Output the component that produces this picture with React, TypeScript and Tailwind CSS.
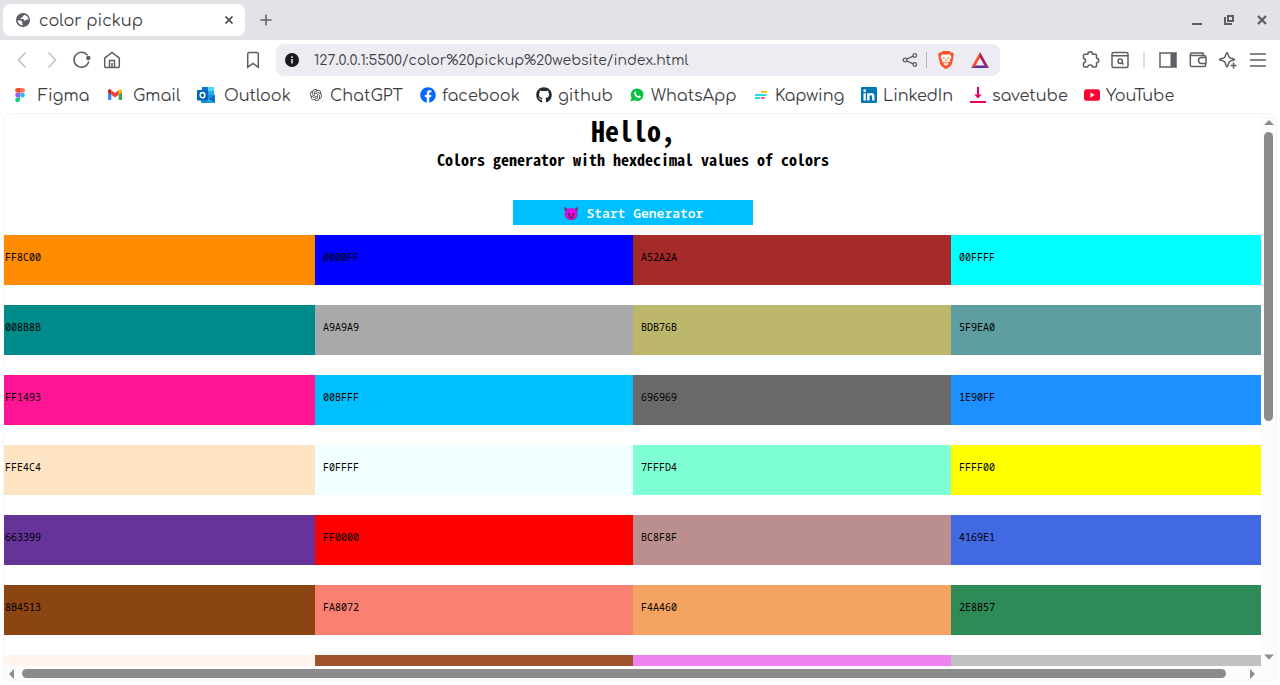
import type { ReactNode } from 'react';
import { FaFacebook, FaGithub } from 'react-icons/fa';
import { SiOpenai } from 'react-icons/si';

const swatches = [
  { hex: 'FF8C00', bg: 'bg-[#ff8c00]' },
  { hex: '0000FF', bg: 'bg-[#0000ff]' },
  { hex: 'A52A2A', bg: 'bg-[#a52a2a]' },
  { hex: '00FFFF', bg: 'bg-[#00ffff]' },
  { hex: '008B8B', bg: 'bg-[#008b8b]' },
  { hex: 'A9A9A9', bg: 'bg-[#a9a9a9]' },
  { hex: 'BDB76B', bg: 'bg-[#bdb76b]' },
  { hex: '5F9EA0', bg: 'bg-[#5f9ea0]' },
  { hex: 'FF1493', bg: 'bg-[#ff1493]' },
  { hex: '00BFFF', bg: 'bg-[#00bfff]' },
  { hex: '696969', bg: 'bg-[#696969]' },
  { hex: '1E90FF', bg: 'bg-[#1e90ff]' },
  { hex: 'FFE4C4', bg: 'bg-[#ffe4c4]' },
  { hex: 'F0FFFF', bg: 'bg-[#f0ffff]' },
  { hex: '7FFFD4', bg: 'bg-[#7fffd4]' },
  { hex: 'FFFF00', bg: 'bg-[#ffff00]' },
  { hex: '663399', bg: 'bg-[#663399]' },
  { hex: 'FF0000', bg: 'bg-[#ff0000]' },
  { hex: 'BC8F8F', bg: 'bg-[#bc8f8f]' },
  { hex: '4169E1', bg: 'bg-[#4169e1]' },
  { hex: '8B4513', bg: 'bg-[#8b4513]' },
  { hex: 'FA8072', bg: 'bg-[#fa8072]' },
  { hex: 'F4A460', bg: 'bg-[#f4a460]' },
  { hex: '2E8B57', bg: 'bg-[#2e8b57]' },
  { hex: '', bg: 'bg-[#fff5ee]' },
  { hex: '', bg: 'bg-[#a0522d]' },
  { hex: '', bg: 'bg-[#ee82ee]' },
  { hex: '', bg: 'bg-[#c0c0c0]' },
];

const FigmaIcon = () => (
  <svg width="16" height="16" viewBox="0 0 16 16">
    <path d="M5.500 1H8v4.700H5.500a2.350 2.350 0 0 1 0-4.700z" fill="#f24e1e" />
    <path d="M8 1h2.600a2.350 2.350 0 0 1 0 4.700H8z" fill="#ff7262" />
    <path d="M5.500 5.700H8v4.700H5.500a2.350 2.350 0 0 1 0-4.700z" fill="#a259ff" />
    <circle cx="10.500" cy="8.050" r="2.400" fill="#1abcfe" />
    <path d="M5.500 10.400H8v2.300a2.400 2.400 0 1 1-2.500-2.300z" fill="#0acf83" />
  </svg>
);

const GmailIcon = () => (
  <svg width="16" height="16" viewBox="0 0 16 16">
    <path d="M1 4v8.200c0 .5.400.9.900.9h2.400V6.500z" fill="#4285f4" />
    <path d="M15 4v8.200c0 .5-.4.900-.9.900h-2.400V6.500z" fill="#34a853" />
    <path d="M11.700 3.300v4.400L15 5.200V3.900c0-1.500-1.600-2.200-2.700-1.300z" fill="#fbbc04" />
    <path d="M4.300 7.700V3.300L8 6.100l3.700-2.800v4.400L8 10.500z" fill="#ea4335" />
    <path d="M1 3.900v1.300l3.300 2.500V3.300l-.6-.7C2.600 1.800 1 2.400 1 3.900z" fill="#c5221f" />
  </svg>
);

const OutlookIcon = () => (
  <svg width="18" height="18" viewBox="0 0 18 18" className="shrink-0">
    <path d="M5 1h12v8H5z" fill="#28a8ea" />
    <path d="M5 1h6v4H5z" fill="#0078d4" />
    <path d="M11 1h6v4h-6z" fill="#50d9ff" />
    <path d="M4 8l14 1v7a1 1 0 0 1-1 1H5a1 1 0 0 1-1-1z" fill="#1490df" />
    <path d="M18 8.500L8 14l9 3q1 0 1-1z" fill="#35b8f1" />
    <path d="M18 8.500L11 13l7 4z" fill="#0f6fc0" />
    <rect y="4" width="11" height="10.500" rx="1" fill="#0364b8" />
    <ellipse cx="5.500" cy="9.200" rx="2.300" ry="2.600" fill="none" stroke="#fff" strokeWidth="1.500" />
  </svg>
);

const WhatsAppIcon = () => (
  <svg width="16" height="16" viewBox="0 0 16 16">
    <path d="M8.300 1.400a6.300 6.300 0 1 1-3 11.900L1.300 14.600l1.300-3.700a6.300 6.300 0 0 1 5.700-9.500z" fill="#0bc144" />
    <path d="M5.900 4.600c.4-.3.800-.2 1 .2l.5 1.200c.1.400-.5.800-.5 1.100.5 1 1.300 1.700 2.300 2.100.4 0 .7-.8 1.100-.7l1.300.7c.4.300.1 1.200-.5 1.600-2.500 1.300-6.600-2.600-5.900-5 .1-.5.400-.9.700-1.200z" fill="#fff" />
  </svg>
);

const KapwingIcon = () => (
  <svg width="16" height="16" viewBox="0 0 16 16">
    <path d="M8 4h6v2H8z" fill="#ffc21a" />
    <path d="M2 7h11.500v2H2z" fill="#22dde1" />
    <path d="M2 10h5.500v2H2z" fill="#22dde1" />
    <path d="M8.500 10h3v2h-3z" fill="#ff3f78" />
  </svg>
);

const LinkedInIcon = () => (
  <svg width="16" height="16" viewBox="0 0 16 16">
    <rect width="16" height="16" rx="1" fill="#0077b5" />
    <path d="M2.500 6.200h2.300v7.300H2.500zM6.200 6.200h2.200v1c1-1.800 5-1.800 5 1.900v4.400h-2.300V9.600c0-2-2.600-1.900-2.600 0v3.900H6.200z" fill="#fff" />
    <circle cx="3.650" cy="3.700" r="1.350" fill="#fff" />
  </svg>
);

const SaveTubeIcon = () => (
  <svg width="16" height="16" viewBox="0 0 16 16">
    <path d="M7 0h2v7.500h2.800L8 11.500 4.200 7.500H7zM0 14h16v2H0z" fill="#f0005e" />
  </svg>
);

const YouTubeIcon = () => (
  <svg width="16" height="16" viewBox="0 0 16 16">
    <rect y="2.300" width="16" height="11.400" rx="2.800" fill="#ff0033" />
    <path d="M6.500 5.500v5L10.700 8z" fill="#fff" />
  </svg>
);

const bookmarks: { label: string; icon: ReactNode; gap: string }[] = [
  { label: 'Figma', icon: <FigmaIcon />, gap: 'gap-[10px]' },
  { label: 'Gmail', icon: <GmailIcon />, gap: 'gap-[10px]' },
  { label: 'Outlook', icon: <OutlookIcon />, gap: 'gap-[10px]' },
  { label: 'ChatGPT', icon: <SiOpenai size={12} color="#3c3c3c" />, gap: 'gap-[6px]' },
  { label: 'facebook', icon: <FaFacebook size={16} color="#0866ff" />, gap: 'gap-[6px]' },
  { label: 'github', icon: <FaGithub size={16} color="#24292f" />, gap: 'gap-[6px]' },
  { label: 'WhatsApp', icon: <WhatsAppIcon />, gap: 'gap-[6px]' },
  { label: 'Kapwing', icon: <KapwingIcon />, gap: 'gap-[6px]' },
  { label: 'LinkedIn', icon: <LinkedInIcon />, gap: 'gap-[6px]' },
  { label: 'savetube', icon: <SaveTubeIcon />, gap: 'gap-[6px]' },
  { label: 'YouTube', icon: <YouTubeIcon />, gap: 'gap-[6px]' },
];

function IconButton({ label, children }: { label: string; children: ReactNode }) {
  return (
    <button type="button" aria-label={label} className="flex size-5 shrink-0 items-center justify-center">
      {children}
    </button>
  );
}

const line = { fill: 'none', stroke: '#5c5f66', strokeWidth: 1.5 } as const;

function TabStrip() {
  return (
    <header className="flex h-10 items-center bg-[#e3e2e7] pr-2 pl-[3px]">
      <div className="flex h-8 w-[242px] items-center rounded-lg bg-white pr-[6px] pl-3">
        <svg width="16" height="16" viewBox="0 0 16 16" className="shrink-0">
          <circle cx="8" cy="8" r="7" fill="#5b5e66" />
          <path d="M9.200 3L7.800 4.200c0 1-.6 1.500-1.800 1.500L5.300 7h3l.9 1.500 1.600.1.700-1.100 2 0c-.1-2.200-1.600-4-4.300-4.500zM2.600 8.200l3.300.2 1.600 2-.4.9.9 1.900c-2.900.1-5.100-1.800-5.400-5z" fill="#fff" />
        </svg>
        <span className="ml-2 flex-1 pt-[2px] text-base/5 whitespace-nowrap">color pickup</span>
        <IconButton label="Close tab">
          <svg width="12" height="12" viewBox="0 0 12 12">
            <path d="M2.500 2.500l7 7m0-7l-7 7" stroke="#404247" strokeWidth="1.700" />
          </svg>
        </IconButton>
      </div>
      <div className="ml-[11px] flex flex-1">
        <IconButton label="New tab">
          <svg width="12" height="12" viewBox="0 0 12 12">
            <path d="M.5 6h11M6 .5v11" {...line} />
          </svg>
        </IconButton>
      </div>
      <div className="flex items-center gap-3">
        <IconButton label="Minimize">
          <svg width="12" height="12" viewBox="0 0 12 12">
            <path d="M0 9h10v2H0z" fill="#5c5f66" />
          </svg>
        </IconButton>
        <IconButton label="Restore">
          <svg width="12" height="12" viewBox="0 0 12 12">
            <path d="M4 2h5v5H4zM1 3v7h7" fill="none" stroke="#5c5f66" strokeWidth="2" />
          </svg>
        </IconButton>
        <IconButton label="Close window">
          <svg width="12" height="12" viewBox="0 0 12 12">
            <path d="M2 2l8 8m0-8l-8 8" stroke="#5c5f66" strokeWidth="2.300" />
          </svg>
        </IconButton>
      </div>
    </header>
  );
}

function Toolbar() {
  return (
    <div className="flex h-10 items-center pr-3 pl-3">
      <nav className="flex flex-[0_1_231px] items-center gap-[10px]">
        <IconButton label="Back">
          <svg width="20" height="20" viewBox="0 0 20 20">
            <path d="M13.500 2.500L6.500 10l7 7.500" fill="none" stroke="#bfc1c6" strokeWidth="1.500" />
          </svg>
        </IconButton>
        <IconButton label="Forward">
          <svg width="20" height="20" viewBox="0 0 20 20">
            <path d="M6.500 2.500l7 7.500-7 7.500" fill="none" stroke="#bfc1c6" strokeWidth="1.500" />
          </svg>
        </IconButton>
        <IconButton label="Reload">
          <svg width="20" height="20" viewBox="0 0 20 20">
            <path d="M16.800 11.500a7.500 7.500 0 1 1-1.300-6.300" {...line} />
            <circle cx="16.300" cy="8" r="2.200" fill="#5c5f66" />
          </svg>
        </IconButton>
        <IconButton label="Home">
          <svg width="20" height="20" viewBox="0 0 20 20">
            <path d="M2.700 8.200L10 2.500l7.300 5.700v8.300c0 .6-.4 1-1 1H3.700c-.6 0-1-.4-1-1zM7.500 17.500v-7h5v7M10 13v4" {...line} />
          </svg>
        </IconButton>
      </nav>
      <IconButton label="Bookmark this page">
        <svg width="20" height="20" viewBox="0 0 20 20">
          <path d="M4.700 17.200V4c0-1 .5-1.500 1.500-1.500h7.600c1 0 1.500.5 1.500 1.500v13.200L10 13.500z" {...line} />
        </svg>
      </IconButton>
      <div className="ml-[13px] flex h-8 flex-1 items-center rounded-lg bg-[#edecf2] pr-[10px] pl-2">
        <svg width="16" height="16" viewBox="0 0 16 16" className="shrink-0">
          <circle cx="8" cy="8" r="7" fill="#1b1b1f" />
          <path d="M7.100 7h1.800v4.500H7.100zM7.100 4.200h1.800v1.700H7.100z" fill="#d0d0d4" />
        </svg>
        <label className="ml-[14px] flex flex-1 items-center">
          <input
            aria-label="Address"
            defaultValue="127.0.0.1:5500/color%20pickup%20website/index.html"
            className="h-6 w-full bg-transparent text-sm text-[#3f4046] outline-none [font-kerning:none]"
          />
        </label>
        <IconButton label="Share">
          <svg width="16" height="16" viewBox="0 0 16 16">
            <g fill="none" stroke="#5c5f66" strokeWidth="1.300">
              <path d="M4.500 7.200l6.800-3M4.500 8.800l6.800 3" />
              <circle cx="3" cy="8" r="1.800" />
              <circle cx="12.800" cy="3.500" r="1.800" />
              <circle cx="12.800" cy="12.500" r="1.800" />
            </g>
          </svg>
        </IconButton>
        <span className="mr-[9px] ml-[6px] h-4 w-px bg-[#b8b8bf]" />
        <IconButton label="Brave Shields">
          <svg width="18" height="20" viewBox="0 0 18 20">
            <path d="M5.500 1h7l1.500 1.600 1.600-.2 1.400 2-.8 2 .3 1-1.800 7c-.3 1.200-4 3.700-5.700 4.600-1.700-.9-5.400-3.400-5.700-4.600l-1.800-7 .3-1-.8-2 1.400-2 1.600.2z" fill="#fb542b" />
            <path d="M5.200 4.200L9 4.800l3.800-.6 1.700 2.700-1.800 3.400.3 1.500-2.300 1 .9 1.200L9 15.700 6.400 14l.9-1.200-2.300-1 .3-1.500-1.800-3.400z" fill="#fff" />
            <path d="M4.800 7l3 .7-.6 1.300zM13.200 7l-3 .7.600 1.300zM9 7.500l.6 3.300L9 12l-.6-1.200zM6.500 11.200L9 13l2.500-1.800-.6 1.600L9 13.800l-1.900-1z" fill="#fb542b" />
          </svg>
        </IconButton>
        <span className="w-[14px]" />
        <IconButton label="Brave Rewards">
          <svg width="18" height="18" viewBox="0 0 18 18">
            <path d="M9 1L0 17l4.600-2.600L9 6.500z" fill="#ff4724" />
            <path d="M9 1l9 16-4.600-2.600L9 6.500z" fill="#9e1f63" />
            <path d="M0 17h18l-4.600-2.600H4.600z" fill="#662d91" />
          </svg>
        </IconButton>
      </div>
      <div className="ml-20 flex items-center gap-[10px]">
        <IconButton label="Extensions">
          <svg width="20" height="20" viewBox="0 0 20 20">
            <path d="M4.500 4.200h3.300c0-3.400 4.700-3.400 4.700 0h3c.6 0 1 .4 1 1v3c3 0 3 4.600 0 4.600v3.300c0 .6-.4 1-1 1h-3c0-2.800-4.700-2.800-4.700 0H4.500c-.6 0-1-.4-1-1V13c2.700-.2 2.700-4.400 0-4.600V5.200c0-.6.4-1 1-1z" {...line} strokeLinejoin="round" />
          </svg>
        </IconButton>
        <IconButton label="Search tabs">
          <svg width="20" height="20" viewBox="0 0 20 20">
            <rect x="2" y="2.500" width="16" height="15" rx="1.500" {...line} />
            <path d="M2 5.700h16M11.800 12.800l1.700 1.700" {...line} />
            <circle cx="10.200" cy="11.200" r="2.200" {...line} />
          </svg>
        </IconButton>
        <span className="mx-[3px] h-4 w-[2px] bg-[#dddde2]" />
        <IconButton label="Sidebar">
          <svg width="20" height="20" viewBox="0 0 20 20">
            <rect x="2" y="3" width="16" height="14" {...line} />
            <path d="M12.500 3H18v14h-5.500z" fill="#5c5f66" />
          </svg>
        </IconButton>
        <IconButton label="Wallet">
          <svg width="20" height="20" viewBox="0 0 20 20">
            <path d="M17.500 7.500v-1c0-.7-.4-1-1-1h-13c-1.400 0-1.400-2.500 0-2.500H15v2.500M2.300 4.200V15c0 1 .7 1.500 1.500 1.500h12.700c.6 0 1-.4 1-1v-2M18 7.500h-4.500a3 3 0 0 0 0 6H18z" {...line} />
          </svg>
        </IconButton>
        <IconButton label="Leo AI">
          <svg width="20" height="20" viewBox="0 0 20 20">
            <path d="M9 2.500c.7 0 1.500 4 2.500 5s5 1.200 5 2-4 1.200-5 2.200-1.800 5.300-2.500 5.300-1.500-4.300-2.500-5.300-5-1.400-5-2.200 4-1 5-2 1.800-5 2.500-5z" {...line} />
            <path d="M15.500 12.500v6M12.500 15.500h6" {...line} />
          </svg>
        </IconButton>
        <IconButton label="Menu">
          <svg width="20" height="20" viewBox="0 0 20 20">
            <path d="M2 4h16M2 10h16M2 16h16" {...line} />
          </svg>
        </IconButton>
      </div>
    </div>
  );
}

function Bookmarks() {
  return (
    <nav className="grid h-[33px] grid-cols-[95px_91px_110px_112px_116px_93px_124px_108px_109px_114px_1fr] items-center pb-[3px] pl-3">
      {bookmarks.map(({ label, icon, gap }) => (
        <a key={label} href="#" className={`flex items-center whitespace-nowrap ${gap}`}>
          <span className="flex w-4 shrink-0 items-center justify-center">{icon}</span>
          <span className="pt-[2px] text-base/5">{label}</span>
        </a>
      ))}
    </nav>
  );
}

function Page() {
  return (
    <main className="-mr-2 -ml-[7px] font-['Noto_Sans_Mono','DejaVu_Sans_Mono',monospace] text-black">
      <div className="flex flex-col items-center font-bold">
        <h1 className="font-['Noto_Sans_Mono_CJK_SC','Noto_Sans_Mono',monospace] text-[28px]/8">Hello,</h1>
        <h2 className="mt-[3px] font-['Noto_Sans_Mono_CJK_SC','Noto_Sans_Mono',monospace] text-base/5 whitespace-nowrap">
          Colors generator with hexdecimal values of colors
        </h2>
        <button type="button" className="mt-[31px] h-[25px] w-60 bg-[#00bfff] text-[13px]/5 font-semibold text-white">
          😈 Start Generator
        </button>
      </div>
      <ul className="mt-[10px] grid grid-cols-4 gap-y-5 text-[10px]/4">
        {swatches.map(({ hex, bg }) => (
          <li key={bg} className={`h-[50px] pt-[14px] pl-2 ${bg}`}>
            {hex}
          </li>
        ))}
      </ul>
    </main>
  );
}

function Scrollbars() {
  return (
    <>
      <div className="col-start-2 row-start-1 flex flex-col items-center bg-[#fcfcfc] pt-1">
        <svg width="10" height="10" viewBox="0 0 10 10"><path d="M5 2l5 5H0z" fill="#8b8b8b" /></svg>
        <div className="mt-1 h-[289px] w-[9px] rounded-full bg-[#8b8b8b]" />
        <svg width="10" height="10" viewBox="0 0 10 10" className="mt-auto mb-1"><path d="M0 2.500h10l-5 5z" fill="#8b8b8b" /></svg>
      </div>
      <div className="col-start-1 row-start-2 flex items-center bg-[#fcfcfc] px-1">
        <svg width="10" height="10" viewBox="0 0 10 10"><path d="M6 0v10L1 5z" fill="#8b8b8b" /></svg>
        <div className="mr-[21px] ml-1 h-[9px] flex-1 rounded-full bg-[#8b8b8b]" />
        <svg width="10" height="10" viewBox="0 0 10 10"><path d="M3 0v10l5-5z" fill="#8b8b8b" /></svg>
      </div>
      <div className="col-start-2 row-start-2 bg-[#fcfcfc]" />
    </>
  );
}

export default function App() {
  return (
    <div className="flex h-screen flex-col overflow-hidden bg-white font-['Comfortaa','Quicksand','Lato',sans-serif] text-[#3c3d43]">
      <TabStrip />
      <Toolbar />
      <Bookmarks />
      <div className="mx-[3px] mb-[3px] grid min-h-0 flex-1 grid-cols-[minmax(0,1fr)_15px] grid-rows-[minmax(0,1fr)_15px] overflow-hidden rounded-lg border border-[#f4f4f5]">
        <div className="overflow-hidden">
          <Page />
        </div>
        <Scrollbars />
      </div>
    </div>
  );
}
